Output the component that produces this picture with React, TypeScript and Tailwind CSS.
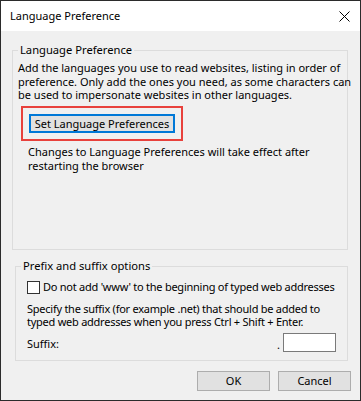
export default function App() {
  return (
    <div className="w-[361px] h-[401px] overflow-hidden border border-[#2b2b2b] bg-[#f0f0f0] flex flex-col font-['Noto_Sans',sans-serif] text-[11px] text-black">
      {/* title bar */}
      <div className="h-[30px] bg-white flex items-center justify-between pl-[9px] pr-[9px]">
        <span className="leading-[14px] text-[11px]">Language Preference</span>
        <svg width="11" height="11" viewBox="0 0 11 11" className="mr-px">
          <path d="M0.5 0.5 L10.5 10.5 M10.5 0.5 L0.5 10.5" stroke="#000" strokeWidth="1" />
        </svg>
      </div>

      {/* language group */}
      <fieldset className="min-w-0 ml-[11px] mr-[12px] mt-[12px] h-[207px] border border-[#dcdcdc] pl-[5px] pr-[5px]">
        <legend className="px-[2px] leading-[14px] text-[11.2px]">Language Preference</legend>
        <p className="mt-[4px] leading-[13.5px] whitespace-nowrap">
          Add the languages you use to read websites, listing in order of
          <br />
          preference. Only add the ones you need, as some characters can
          <br />
          be used to impersonate websites in other languages.
        </p>
        <div className="mt-[4.5px] ml-[3px] w-[162px] h-[35px] border-2 border-[#e8413c] p-[6px] flex">
          <button className="flex-1 whitespace-nowrap border-2 border-[#0078d7] bg-[#e1e1e1] leading-[14px] flex items-center justify-center">
            Set Language Preferences
          </button>
        </div>
        <p className="mt-[4px] ml-[10px] leading-[13.5px] whitespace-nowrap">
          Changes to Language Preferences will take effect after
          <br />
          restarting the browser
        </p>
      </fieldset>

      {/* prefix / suffix group */}
      <fieldset className="min-w-0 ml-[14px] mr-[12px] mt-[9px] h-[102px] border border-[#dcdcdc] pl-[5px] pr-[11px]">
        <legend className="px-[2px] leading-[14px] text-[11.2px]">Prefix and suffix options</legend>
        <div className="pl-[6px] tracking-[-0.25px]">
          <label className="mt-[7.5px] h-[14px] flex items-center gap-[3px] whitespace-nowrap">
            <span className="shrink-0 w-[13px] h-[13px] border border-[#333] bg-white" />
            Do not add 'www' to the beginning of typed web addresses
          </label>
          <p className="mt-[7px] leading-[13.5px] whitespace-nowrap">
            Specify the suffix (for example .net) that should be added to
            <br />
            typed web addresses when you press Ctrl + Shift + Enter.
          </p>
          <div className="mt-[4.5px] h-[19px] flex items-center justify-between tracking-normal">
            <span className="mt-[3px] leading-[14px]">Suffix:</span>
            <div className="flex items-end gap-[3px] h-full">
              <span className="leading-[14px]">.</span>
              <input className="w-[53px] h-[19px] border border-[#7a7a7a] bg-white outline-none" />
            </div>
          </div>
        </div>
      </fieldset>

      {/* buttons */}
      <div className="mt-[10px] mr-[9px] flex justify-end gap-[8px]">
        <button className="w-[73px] h-[20px] border border-[#adadad] bg-[#e1e1e1] leading-[14px]">OK</button>
        <button className="w-[73px] h-[20px] border border-[#adadad] bg-[#e1e1e1] leading-[14px]">Cancel</button>
      </div>
    </div>
  );
}
